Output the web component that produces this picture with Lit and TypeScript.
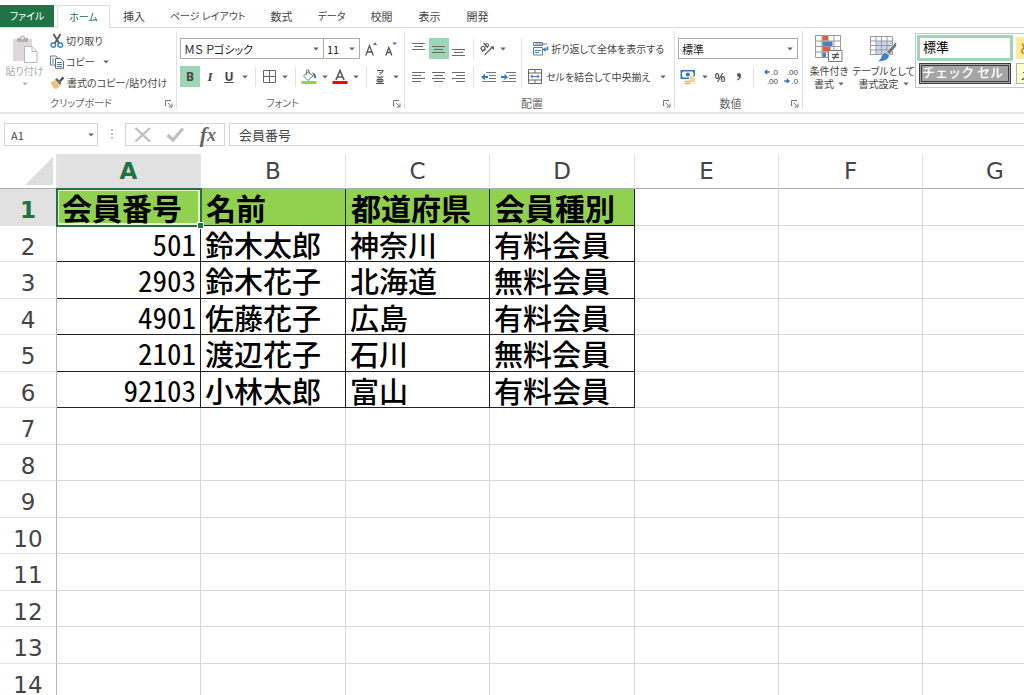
import { LitElement, html, css, svg, nothing, TemplateResult } from "lit";
import { customElement } from "lit/decorators.js";
import { classMap } from "lit/directives/class-map.js";

const COLUMNS = ["A", "B", "C", "D", "E", "F", "G"];
const HEADINGS = ["会員番号", "名前", "都道府県", "会員種別"];
const MEMBERS = [
  ["501", "鈴木太郎", "神奈川", "有料会員"],
  ["2903", "鈴木花子", "北海道", "無料会員"],
  ["4901", "佐藤花子", "広島", "有料会員"],
  ["2101", "渡辺花子", "石川", "無料会員"],
  ["92103", "小林太郎", "富山", "有料会員"],
];
const ROW_COUNT = 14;
const TABS = ["挿入", "ページ レイアウト", "数式", "データ", "校閲", "表示", "開発"];
const isKana = (text: string) => /^[\u3040-\u30ff\s]+$/.test(text);

const icon = (w: number, h: number, body: unknown) =>
  html`<svg class="icon" width=${w} height=${h} viewBox="0 0 ${w} ${h}" fill="none" aria-hidden="true">${body}</svg>`;

const arrow = html`<svg class="arrow" width="6" height="4" viewBox="0 0 6 4" aria-hidden="true">
  <path d="M0.3 0.5H5.7L3 3.6Z" fill="#666" />
</svg>`;

const lines = (y: number, spans: number[][]) =>
  icon(14, 16, svg`<path stroke="#6a6a6a" d=${spans.map(([a, b], i) => `M${a} ${y + i * 3 + 0.5}H${b}`).join("")} />`);

const ICONS = {
  paste: icon(28, 28, svg`
    <path d="M2 4H21V26H2Z" fill="#dcd8dc"/>
    <path d="M6 7V3H9Q9 0.5 11.500 0.5T14 3H17V7Z" fill="#b3afb3"/><circle cx="11.500" cy="3" r="1.200" fill="#fff"/>
    <path d="M13.500 11.500H21L26 16.500V27.500H13.500Z" fill="#fff" stroke="#b9b5b9"/>
    <path d="M21 11.500V16.500H26" stroke="#b9b5b9"/>`),
  cut: icon(14, 16, svg`
    <path d="M3.500 1L9 10M10.500 1L5 10" stroke="#555" stroke-width="1.800"/>
    <circle cx="3.300" cy="12" r="2.300" stroke="#3f7fbf" stroke-width="1.400"/>
    <circle cx="10.300" cy="12" r="2.300" stroke="#3f7fbf" stroke-width="1.400"/>`),
  copy: icon(14, 14, svg`
    <path d="M0.500 1H6L7.500 3V10H0.500Z" fill="#fff" stroke="#777"/>
    <path d="M5.500 3.500H10.500L13.500 6.500V13.300H5.500Z" fill="#fff" stroke="#666"/>
    <path d="M2 4H4M2 6H4M2 8H4M7 7.500H12M7 9.500H12M7 11.500H12" stroke="#4a86c5"/>`),
  brush: icon(15, 14, svg`
    <path d="M0.500 6.500L5 4L10 9.500L6 13.500Q2 11 0.500 6.500Z" fill="#efc078"/>
    <path d="M5 3.500L7 2L11.500 7L10 9Z" fill="#6a6a6a"/>
    <path d="M9 4.500L12.500 0.500L14.300 2.200L10.800 6Z" fill="#555"/>`),
  grow: icon(12, 14, svg`<path d="M8 3L10.300 0.300L12 3Z" fill="#2f6fb3"/>
    <path d="M0.800 13.500L4.500 3.500L8.300 13.500M2.200 10H7" stroke="#555" stroke-width="1.300"/>`),
  shrink: icon(12, 14, svg`<path d="M7.300 0.500H12L9.700 3Z" fill="#2f6fb3"/>
    <path d="M0.800 13.500L3.800 5.500L6.800 13.500M2 10.500H5.600" stroke="#555" stroke-width="1.300"/>`),
  borders: icon(13, 13, svg`<path d="M0.500 0.500H12.500V12.500H0.500ZM6.500 0.500V12.500M0.500 6.500H12.500" stroke="#666"/>`),
  fill: icon(16, 16, svg`
    <path d="M2.500 7L7.500 2.500L12 7L7 11.500Z" stroke="#777" fill="#fff"/>
    <path d="M5.500 6V2Q5.500 0.700 6.700 0.700T8 2V5" stroke="#777"/>
    <path d="M11 3.500Q15.500 4 15 9.500Q13 9.500 12.500 6Z" fill="#2f6fb3"/>
    <path d="M0.500 12H15.500V15H0.500Z" fill="#92d050"/>`),
  fontColor: icon(16, 16, svg`
    <path d="M4 11L8 1.500L12 11M5.500 8H10.500" stroke="#5d5d5d" stroke-width="1.700"/>
    <path d="M0.500 12H15.500V15H0.500Z" fill="#f00"/>`),
  phonetic: icon(10, 16, svg`
    <path d="M2 1.500H8Q7.500 4 4.500 5.500M5 3V4" stroke="#555" stroke-width="1.200"/>
    <path d="M1.500 8H8.500M2 10.500H8V12.500H2ZM4 8V14M6 8V14M1 14.500H9" stroke="#555"/>`),
  rotate: icon(16, 14, svg`
    <circle cx="4" cy="6.500" r="2" stroke="#555" stroke-width="1.200"/><path d="M3 9.500L6.500 7" stroke="#555" stroke-width="1.200"/>
    <path d="M4.500 1L9 5.500" stroke="#555" stroke-width="1.200"/><circle cx="8" cy="3.300" r="1.700" stroke="#555"/>
    <path d="M5.500 13L13.500 5" stroke="#666" stroke-width="1.200"/><path d="M11 4.500H15V8Z" fill="#555"/>`),
  outdent: icon(15, 12, svg`
    <path d="M5 1.500H15M8 4.500H15M8 7.500H15M1 10.500H15" stroke="#777"/>
    <path d="M0 6L4 2.800V5H7V7H4V9.200Z" fill="#2f7fc5"/>`),
  indent: icon(15, 12, svg`
    <path d="M5 1.500H15M8 4.500H15M8 7.500H15M1 10.500H15" stroke="#777"/>
    <path d="M7 6L3.500 2.800V5H0V7H3.500V9.200Z" fill="#2f7fc5"/>`),
  wrap: icon(16, 16, svg`
    <path d="M0.500 1.500H9.500V4.500H0.500ZM0.500 6.500H9.500V14H0.500Z" stroke="#777"/>
    <path d="M2 3H14M2 9.500H8M2 11.500H6" stroke="#3f7fc5"/>
    <path d="M14.500 5.500V8.500H11.500" stroke="#2f7fc5" stroke-width="1.500"/><path d="M9.500 8.500L12.500 6V11Z" fill="#2f7fc5"/>`),
  merge: icon(16, 15, svg`
    <path d="M0.500 0.500H13.500V14.500H0.500ZM0.500 4H13.500M0.500 11H13.500M7 0.500V4M7 11V14.500" stroke="#666"/>
    <path d="M3 7.500H11" stroke="#3f7fc5"/><path d="M2 7.500L4.500 5.500V9.500ZM12 7.500L9.500 5.500V9.500Z" fill="#3f7fc5"/>`),
  currency: icon(16, 16, svg`
    <path d="M0.500 1H15V10H0.500Z" fill="#3576b8"/><path d="M3 2.500H12.500L13.500 4V7L12.500 8.500H3L2 7V4Z" fill="#fff"/>
    <circle cx="7.800" cy="5.500" r="2" fill="#3576b8"/>
    <path d="M9 7H15V12H9ZM4 11.500H11V15.500H4Z" fill="#fff"/>
    <path d="M9.500 7.800H15M9.500 9.800H15M9.500 11.800H15M4.500 12.500H10.500M4.500 14.500H10.500" stroke="#eab765" stroke-width="1.300"/>`),
  comma: icon(6, 10, svg`<path d="M3 5Q1 5 1 3T3 1T5 3.500Q5 7 1.500 8.500L1.200 7.500Q3 6.700 3 5Z" fill="#555"/>`),
  left: icon(6, 6, svg`<path d="M6 3H2" stroke="#2f6fb3" stroke-width="1.300"/><path d="M0 3L3.300 0.300V5.700Z" fill="#2f6fb3"/>`),
  right: icon(6, 6, svg`<path d="M0 3H4" stroke="#2f6fb3" stroke-width="1.300"/><path d="M6 3L2.700 0.300V5.700Z" fill="#2f6fb3"/>`),
  conditional: icon(28, 28, svg`
    <path d="M0.500 0.500H25.500V22.500H0.500ZM7 0.500V22.500M13 0.500V22.500M19 0.500V22.500M0.500 6H25.500M0.500 11.500H25.500M0.500 17H25.500" stroke="#999"/>
    <path d="M7.500 1H13V5.500H7.500ZM7.500 12H15.500V16.500H7.500Z" fill="#d95f3f"/>
    <path d="M7.500 6.500H17.500V11H7.500ZM7.500 17.500H11V22H7.500Z" fill="#4a81bd"/>
    <path d="M13.500 15.500H27V26.500H13.500Z" fill="#fff" stroke="#777"/>
    <path d="M17 19.700H24M17 22.300H24M22.500 17.500L18.500 24.500" stroke="#555" stroke-width="1.200"/>`),
  tableStyle: icon(28, 28, svg`
    <path d="M0.500 1.500H22.500V19.500H0.500Z" fill="#fff"/><path d="M6 6H22.500V19.500H6Z" fill="#c5d9ee"/>
    <path d="M0.500 1.500H22.500V19.500H0.500ZM6 1.500V19.500M11.500 1.500V19.500M17 1.500V19.500M0.500 6H22.500M0.500 10.500H22.500M0.500 15H22.500" stroke="#999"/>
    <path d="M26.500 6.500V11L19.500 19.500L16.500 17Z" fill="#757575" stroke="#fff" stroke-width="0.600"/>
    <path d="M15.500 17.500L19.500 20.500Q18 27 7 26.500Q11 24.500 11.500 21T15.500 17.500Z" fill="#3f7fc5" stroke="#fff" stroke-width="0.600"/>`),
  launcher: icon(8, 8, svg`<path d="M0.500 6V0.500H6M3 3L6.500 6.500M7 3.500V7H3.500" stroke="#777"/>`),
  cancel: icon(18, 16, svg`<path d="M1.500 1L16 14.500M16 1L1.500 14.500" stroke="#bdbdbd" stroke-width="2.200"/>`),
  accept: icon(19, 15, svg`<path d="M1.500 8L7 13L17 1.500" stroke="#bdbdbd" stroke-width="3.200"/>`),
};

@customElement("app-root")
export class AppRoot extends LitElement {
  static styles = css`
    :host {
      display: flex;
      flex-direction: column;
      height: 100vh;
      overflow: hidden;
      background: #fff;
      color: #444;
      font: 11px/14px "Noto Sans CJK JP", sans-serif;
      font-feature-settings: "palt";
    }
    * { box-sizing: border-box; }
    button, input, select {
      font: inherit;
      font-feature-settings: inherit;
      color: inherit;
      background: none;
      border: 0;
      margin: 0;
      padding: 0;
      border-radius: 0;
      appearance: none;
      outline: none;
    }
    button { display: flex; align-items: center; justify-content: center; white-space: nowrap; }
    .icon, .arrow { display: block; flex: none; }

    .tabs { display: flex; align-items: flex-end; padding-top: 5px; border-bottom: 1px solid #dcdcdc; flex: none; }
    .tab { height: 22px; padding: 0 13px; }
    .kana, .file, .home { font-size: 10px; }
    .kana { padding: 0 12px; }
    .file { background: #217346; color: #fff; width: 54px; margin-right: 3px; padding: 0; }
    .home { color: #217346; border: 1px solid #dcdcdc; border-bottom: 0; background: #fff; margin-bottom: -1px; width: 53px; height: 23px; padding: 0; }

    .ribbon { display: flex; padding: 3px 0; border-bottom: 2px solid #e6e6e6; height: 86px; flex: none; overflow: hidden; }
    .group { display: flex; flex-direction: column; justify-content: space-between; flex: none; border-right: 1px solid #e1e1e1; padding: 7px 3px 0; }
    .group.clip { width: 177px; padding-left: 5px; padding-top: 3px; }
    .group.type { width: 228px; }
    .group.align { width: 270px; padding-left: 4px; }
    .group.number { width: 128px; }
    .group.styles { border: 0; padding: 2px 0 0 3px; }
    .foot { display: flex; align-items: center; height: 12px; color: #666; }
    .foot span { flex: 1; text-align: center; padding-right: 8px; }
    .clip .foot, .type .foot { font-size: 10px; }
    .foot button { width: 8px; height: 10px; align-items: flex-end; }
    .row { display: flex; align-items: center; height: 21px; }
    .rows { display: flex; flex-direction: column; gap: 7px; }
    .body { display: flex; }
    .tool { width: 20px; height: 21px; flex: none; }
    .narrow { width: 18px; }
    .drop { width: 13px; height: 21px; flex: none; }
    .on { background: #9fd5b7; }
    .sep { width: 1px; height: 20px; margin: 0 4px; background: #e1e1e1; flex: none; }
    .sep.tall { height: 49px; margin: 0 6px 0 3px; }
    .bold, .under { font: 700 12px "Noto Sans", sans-serif; }
    .italic { font: italic 700 13px "Liberation Serif", serif; }
    .under { text-decoration: underline; }
    .percent { font: 500 13px "Noto Sans", sans-serif; }
    .labelled { gap: 2px; height: 21px; font-size: 10px; }
    .spread { gap: 6px; }

    .combo { display: grid; align-items: center; height: 21px; border: 1px solid #ababab; flex: none; }
    .combo > * { grid-area: 1 / 1; }
    .combo select { width: 100%; padding-left: 3px; color: #222; }
    .combo .arrow { justify-self: end; margin-right: 4px; pointer-events: none; }
    .fontname { width: 144px; }
    .fontsize { width: 37px; margin: 0 1px 0 -1px; }
    .format { width: 120px; }

    .paste { flex-direction: column; width: 39px; gap: 1px; color: #aaa; margin-right: 6px; justify-content: flex-start; font-size: 10px; padding-top: 1px; }
    .paste .arrow { opacity: 0.5; margin-top: 3px; }
    .cliplist { display: flex; flex-direction: column; align-items: flex-start; gap: 7px; font-size: 10px; }
    .cliplist button { height: 14px; gap: 2px; }
    .cliplist .arrow { margin-left: 6px; }

    .decimal { flex-direction: column; align-items: flex-end; font: 8px/9px "Liberation Sans", sans-serif; }
    .decimal span { display: flex; align-items: center; gap: 1px; }

    .big { flex-direction: column; font-size: 10px; line-height: 13px; gap: 1px; justify-content: flex-start; padding-top: 2px; }
    .big .second { display: flex; align-items: center; justify-content: center; gap: 4px; }
    .cond { width: 46px; }
    .fmt { width: 63px; }
    .gallery { display: grid; grid-template-columns: 96px 96px; grid-template-rows: 26px 21px; gap: 2px 3px; padding: 1px; border: 1px solid #c6c6c6; height: 55px; }
    .swatch { justify-content: flex-start; font-size: 13px; font-feature-settings: normal; padding-left: 3px; color: #000; }
    .swatch.normal { border: 3px solid #9fd5b7; padding-bottom: 3px; }
    .swatch.check { background: #a5a5a5; color: #fff; font-weight: 500; border: 3px double #3f3f3f; margin: 0 2px; padding: 0 0 3px; }
    .swatch.neutral { background: #ffeb9c; color: #9c6500; margin: 2px 0; }
    .swatch.memo { background: #ffffcc; border: 1px solid #b2b2b2; }

    .bar { display: flex; gap: 4px; padding: 9px 0 8px 4px; flex: none; }
    .box { display: flex; align-items: center; height: 23px; border: 1px solid #d4d4d4; }
    .namebox { width: 94px; }
    .namebox input { flex: 1; min-width: 0; padding-left: 6px; font-feature-settings: normal; }
    .dots { width: 19px; display: grid; place-items: center; }
    .actions { width: 100px; padding: 0 8px; justify-content: space-between; }
    .fx { font: italic 700 22px/18px "Liberation Serif", serif; color: #666; }
    .fx small { font-size: 18px; }
    .formula { flex: 1; border-right: 0; }
    .formula input { flex: 1; font-size: 13px; padding-left: 9px; font-feature-settings: normal; }

    .sheet { flex: 1; min-height: 0; overflow: hidden; }
    table { border-collapse: separate; border-spacing: 0; table-layout: fixed; width: 1068px; color: #000; }
    .rowhead { width: 57px; }
    .thin { width: 144px; }
    .wide { width: 145px; }
    th, td { padding: 0; white-space: nowrap; }
    thead th { height: 35px; border-right: 1px solid #e3e3e3; border-bottom: 1px solid #ababab; }
    thead th, tbody th { font: 23px/28px "DejaVu Sans", sans-serif; color: #444; }
    tbody th { border-right: 1px solid #b5b5b5; border-bottom: 1px solid #e3e3e3; padding-top: 6px; }
    tbody tr { height: 37px; }
    tbody tr:nth-child(even) { height: 36px; }
    td { font-size: 29px; font-weight: 500; line-height: 30px; font-feature-settings: "hwid"; border-right: 1px solid #d6d6d6; border-bottom: 1px solid #d6d6d6; padding: 0 4px; }
    td.data { border-color: #222; }
    td.head { background: #92d050; font-weight: 700; font-size: 30px; padding: 0 5px; }
    td.num { text-align: right; font-weight: 400; padding-bottom: 2px; }
    thead th.active, tbody th.active { background: #e1e1e1; color: #217346; font-weight: 700; }
    td.selected { position: relative; outline: 2px solid #217346; outline-offset: -1px; box-shadow: inset 0 0 0 2px #e3f3d0; }
    .handle { position: absolute; right: -3px; bottom: -3px; width: 5px; height: 5px; background: #217346; box-shadow: 0 0 0 1px #fff; z-index: 1; }
    .corner svg { display: block; margin-left: auto; margin-right: 3px; }
  `;

  private tool(label: string, content: unknown, cls = "") {
    return html`<button class="tool ${cls}" aria-label=${label}>${content}</button>`;
  }

  private drop(label: string) {
    return html`<button class="drop" aria-label=${label}>${arrow}</button>`;
  }

  private foot(label: string) {
    return html`<div class="foot"><span>${label}</span><button aria-label="${label}の設定">${ICONS.launcher}</button></div>`;
  }

  private combo(label: string, value: string, cls: string) {
    return html`<div class="combo ${cls}"><select aria-label=${label}><option>${value}</option></select>${arrow}</div>`;
  }

  private renderRibbon(): TemplateResult {
    const sep = html`<span class="sep"></span>`;
    return html`
      <section class="ribbon">
        <div class="group clip">
          <div class="body">
            <button class="paste">${ICONS.paste}<span>貼り付け</span>${arrow}</button>
            <div class="cliplist">
              <button>${ICONS.cut}切り取り</button>
              <button>${ICONS.copy}コピー${arrow}</button>
              <button>${ICONS.brush}書式のコピー/貼り付け</button>
            </div>
          </div>
          ${this.foot("クリップボード")}
        </div>
        <div class="group type">
          <div class="rows">
            <div class="row">
              ${this.combo("フォント名", "ＭＳ Ｐゴシック", "fontname")}
              ${this.combo("フォント サイズ", "11", "fontsize")}
              ${this.tool("拡大", ICONS.grow)}${this.tool("縮小", ICONS.shrink)}
            </div>
            <div class="row">
              ${this.tool("太字", "B", "bold on")}${this.tool("斜体", "I", "italic")}
              ${this.tool("下線", "U", "narrow under")}${this.drop("下線の種類")}${sep}
              ${this.tool("罫線", ICONS.borders, "narrow")}${this.drop("罫線の種類")}${sep}
              ${this.tool("塗りつぶし", ICONS.fill, "narrow")}${this.drop("塗りつぶしの色")}
              ${this.tool("文字色", ICONS.fontColor, "narrow")}${this.drop("文字の色")}${sep}
              ${this.tool("ふりがな", ICONS.phonetic, "narrow")}${this.drop("ふりがなの設定")}
            </div>
          </div>
          ${this.foot("フォント")}
        </div>
        <div class="group align">
          <div class="body">
            <div class="rows">
              <div class="row">
                ${this.tool("上揃え", lines(2, [[0, 13], [2, 11], [0, 13]]))}
                ${this.tool("上下中央", lines(5, [[0, 13], [2, 11], [0, 13]]), "on")}
                ${this.tool("下揃え", lines(8, [[0, 13], [2, 11], [0, 13]]))}${sep}
                ${this.tool("方向", ICONS.rotate, "narrow")}${this.drop("方向の種類")}
              </div>
              <div class="row">
                ${this.tool("左揃え", lines(3, [[0, 13], [0, 9], [0, 13], [0, 9]]))}
                ${this.tool("中央揃え", lines(3, [[0, 13], [2, 11], [0, 13], [2, 11]]))}
                ${this.tool("右揃え", lines(3, [[0, 13], [4, 13], [0, 13], [4, 13]]))}${sep}
                ${this.tool("インデント解除", ICONS.outdent)}${this.tool("インデント", ICONS.indent)}
              </div>
            </div>
            <span class="sep tall"></span>
            <div class="rows">
              <button class="labelled row">${ICONS.wrap}折り返して全体を表示する</button>
              <div class="row spread">
                <button class="labelled">${ICONS.merge}セルを結合して中央揃え</button>${this.drop("結合の種類")}
              </div>
            </div>
          </div>
          ${this.foot("配置")}
        </div>
        <div class="group number">
          <div class="rows">
            ${this.combo("表示形式", "標準", "format")}
            <div class="row">
              ${this.tool("通貨", ICONS.currency)}${this.drop("通貨の種類")}
              ${this.tool("パーセント", "%", "narrow percent")}${this.tool("桁区切り", ICONS.comma)}${sep}
              ${this.tool("小数点以下を増やす", html`<span>${ICONS.left}.0</span><span>.00</span>`, "decimal")}
              ${this.tool("小数点以下を減らす", html`<span>.00</span><span>${ICONS.right}.0</span>`, "decimal")}
            </div>
          </div>
          ${this.foot("数値")}
        </div>
        <div class="group styles">
          <div class="body">
            <button class="big cond">${ICONS.conditional}<span>条件付き<span class="second">書式${arrow}</span></span></button>
            <button class="big fmt">${ICONS.tableStyle}<span>テーブルとして<span class="second">書式設定${arrow}</span></span></button>
            <div class="gallery">
              <button class="swatch normal">標準</button>
              <button class="swatch neutral">どちらでもない</button>
              <button class="swatch check">チェック セル</button>
              <button class="swatch memo">メモ</button>
            </div>
          </div>
        </div>
      </section>`;
  }

  private renderCell(row: number, col: number) {
    const value = row === 1 ? HEADINGS[col] : MEMBERS[row - 2]?.[col];
    const selected = row === 1 && col === 0;
    const cls = {
      data: value !== undefined,
      head: row === 1 && value !== undefined,
      num: row > 1 && col === 0,
      selected,
    };
    return html`<td class=${classMap(cls)}>${value ?? nothing}${selected ? html`<span class="handle"></span>` : nothing}</td>`;
  }

  render() {
    return html`
      <nav class="tabs">
        <button class="tab file">ファイル</button>
        <button class="tab home">ホーム</button>
        ${TABS.map((t) => html`<button class=${classMap({ tab: true, kana: isKana(t) })}>${t}</button>`)}
      </nav>
      ${this.renderRibbon()}
      <div class="bar">
        <div class="box namebox"><input aria-label="名前ボックス" value="A1" />${this.drop("セルの選択")}</div>
        <span class="dots">${icon(2, 11, svg`<path d="M0 1H2M0 5H2M0 9H2" stroke="#aaa" stroke-width="1.500"/>`)}</span>
        <div class="box actions">
          <button aria-label="キャンセル">${ICONS.cancel}</button>
          <button aria-label="入力">${ICONS.accept}</button>
          <button class="fx" aria-label="関数の挿入">f<small>x</small></button>
        </div>
        <div class="box formula"><input aria-label="数式バー" value="会員番号" /></div>
      </div>
      <div class="sheet">
        <table>
          <colgroup>
            <col class="rowhead" />
            ${COLUMNS.map((_, i) => html`<col class=${[1, 3, 6].includes(i) ? "wide" : "thin"} />`)}
          </colgroup>
          <thead>
            <tr>
              <th class="corner" aria-label="すべて選択">
                <svg width="28" height="28" viewBox="0 0 28 28" aria-hidden="true"><path d="M28 0V28H0Z" fill="#dedede" /></svg>
              </th>
              ${COLUMNS.map((c, i) => html`<th scope="col" class=${classMap({ active: i === 0 })}>${c}</th>`)}
            </tr>
          </thead>
          <tbody>
            ${Array.from({ length: ROW_COUNT }, (_, i) => i + 1).map(
              (r) => html`<tr>
                <th scope="row" class=${classMap({ active: r === 1 })}>${r}</th>
                ${COLUMNS.map((_, c) => this.renderCell(r, c))}
              </tr>`
            )}
          </tbody>
        </table>
      </div>
    `;
  }
}
